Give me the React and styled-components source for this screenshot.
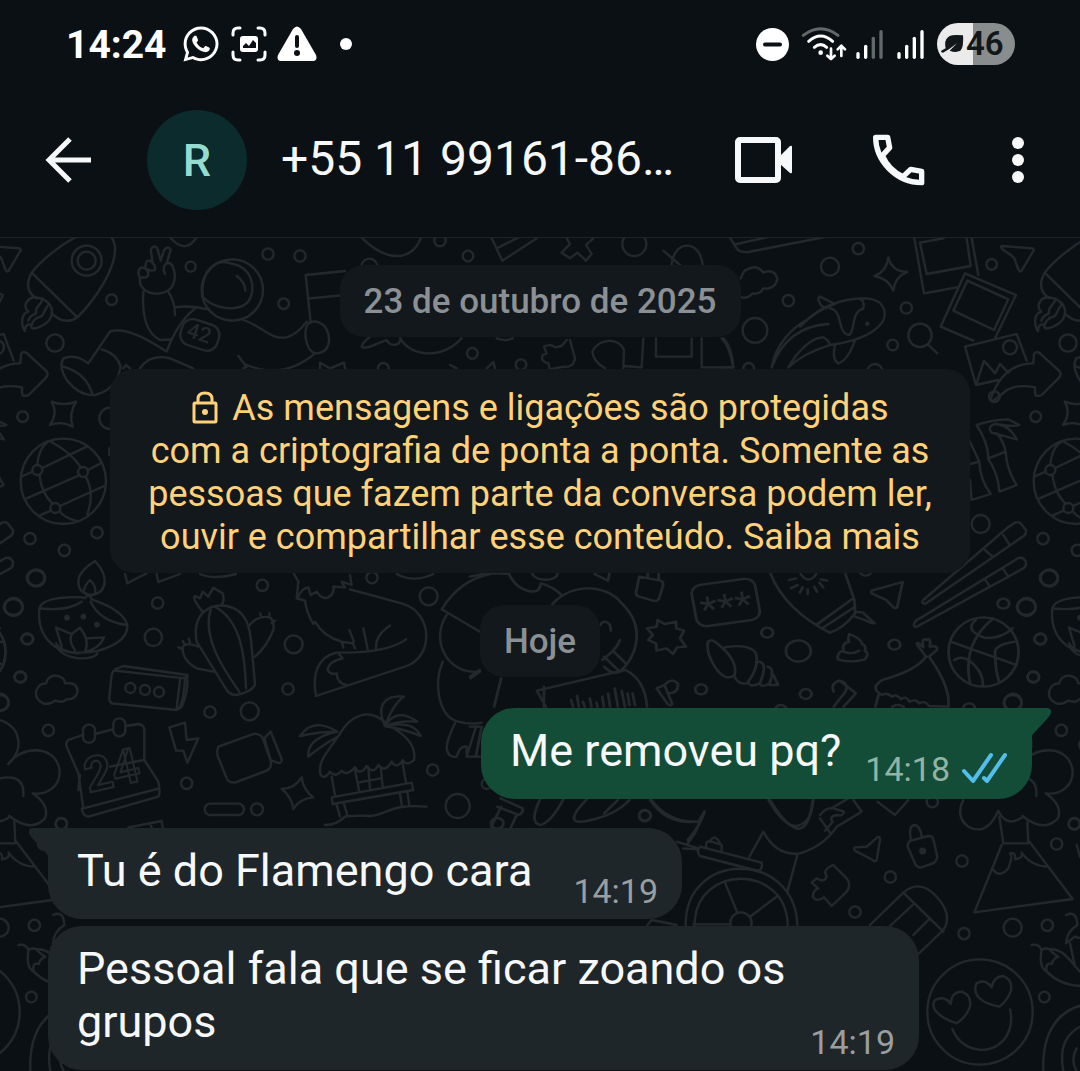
import React from "react";
import styled, { createGlobalStyle } from "styled-components";
import { FaWhatsapp } from "react-icons/fa";

const GlobalStyle = createGlobalStyle`
  *, *::before, *::after { box-sizing: border-box; }
  html, body, #root { min-height: 100%; }
  body {
    margin: 0;
    background: #0b1014;
    color: #f7f8fa;
    font-family: Roboto, "Noto Sans", sans-serif;
  }
`;

const Screen = styled.div`
  display: flex;
  flex-direction: column;
  min-height: 100vh;
  overflow: hidden;
`;

/* ---------- status bar ---------- */

const StatusBar = styled.div`
  display: flex;
  align-items: center;
  justify-content: space-between;
  height: 88px;
  padding: 0 65px 0 66px;
`;

const StatusGroup = styled.div`
  display: flex;
  align-items: center;
  gap: ${(p) => p.$gap}px;
  color: #ffffff;

  svg { display: block; flex: none; }
`;

const Clock = styled.time`
  margin-right: 4px;
  padding-top: 2px;
  font-size: 39px;
  font-weight: 700;
  line-height: 48px;
`;

const MoreDot = styled.span`
  width: 12px;
  height: 12px;
  margin-left: 13px;
  border-radius: 50%;
  background: #ffffff;
`;

const Battery = styled.div`
  display: flex;
  align-items: center;
  width: 78px;
  height: 42px;
  padding-left: 4px;
  gap: 2px;
  border-radius: 21px;
  background: linear-gradient(90deg, #ebebeb 46%, #898d8e 46%);
  color: #12171a;
  font-size: 33px;
  font-weight: 600;
  line-height: 42px;
`;

/* ---------- conversation bar ---------- */

const AppBar = styled.header`
  display: flex;
  align-items: center;
  height: 150px;
  padding: 0 49px 6px 38px;
  border-bottom: 1px solid #1d2327;
`;

const IconButton = styled.button`
  display: grid;
  place-items: center;
  flex: none;
  width: ${(p) => p.$width}px;
  height: 60px;
  padding: 0;
  border: 0;
  background: none;
  color: #f7f8fa;
  cursor: pointer;

  svg { display: block; }
`;

const Avatar = styled.div`
  display: grid;
  place-items: center;
  flex: none;
  width: 100px;
  height: 100px;
  padding-top: 2px;
  margin-left: 49px;
  border-radius: 50%;
  background: #0b2b2d;
  color: #94dbd0;
  font-size: 45px;
  font-weight: 500;
  line-height: 54px;
`;

const Title = styled.h1`
  flex: 1;
  min-width: 0;
  margin: 0 16px 0 34px;
  overflow: hidden;
  font-size: 48px;
  font-weight: 400;
  line-height: 60px;
  padding-bottom: 2px;
  white-space: nowrap;
`;

const Actions = styled.div`
  display: flex;
  gap: 76px;
`;

/* ---------- chat ---------- */

const Chat = styled.main`
  position: relative;
  flex: 1;
`;

const WallpaperLayer = styled.svg`
  position: absolute;
  inset: 0;
  width: 100%;
  height: 100%;
`;

const Thread = styled.div`
  position: relative;
  display: flex;
  flex-direction: column;
  padding: 27px 48px 0;
`;

const DateChip = styled.div`
  align-self: center;
  padding: 17px 24px 15px;
  border-radius: 24px;
  background: #12181c;
  color: #8b9094;
  font-size: 35px;
  font-weight: 500;
  line-height: 40px;
`;

const Notice = styled.p`
  align-self: center;
  width: 860px;
  max-width: 100%;
  margin: 32px 0;
  padding: 18px 24px 14px;
  border-radius: 24px;
  background: #12181c;
  color: #ffd279;
  font-size: 36px;
  line-height: 43px;
  text-align: center;

  svg { vertical-align: -4px; margin-right: 4px; }
`;

const Bubble = styled.article`
  position: relative;
  display: flow-root;
  align-self: ${(p) => (p.$mine ? "flex-end" : "flex-start")};
  max-width: 871px;
  margin-top: ${(p) => p.$gap}px;
  padding: 16px 24px 8px 29px;
  border-radius: 34px;
  ${(p) => p.$tail && (p.$mine ? "border-top-right-radius: 0;" : "border-top-left-radius: 0;")}
  background: ${(p) => (p.$mine ? "#144d37" : "#1f2629")};
  font-size: 45px;
  line-height: 53px;
`;

const Tail = styled.svg`
  position: absolute;
  top: 0;
  ${(p) => (p.$mine ? "right: -20px;" : "left: -20px; transform: scaleX(-1);")}
  color: ${(p) => (p.$mine ? "#144d37" : "#1f2629")};
`;

const Meta = styled.span`
  float: right;
  display: flex;
  align-items: center;
  gap: 12px;
  margin: ${(p) => (p.$mine ? "25px 0 2px" : "27px 0 0")} ${(p) => p.$space}px;
  margin-right: 0;
  color: ${(p) => (p.$mine ? "#93b3a5" : "#9a9ea0")};
  font-size: 34px;
  line-height: 40px;
`;

function Message({ mine, tail, gap, space, time, read, children }) {
  return (
    <Bubble $mine={mine} $tail={tail} $gap={gap}>
      {tail && (
        <Tail $mine={mine} width="21" height="28" viewBox="0 0 21 28" aria-hidden="true">
          <path d="M0 0H17Q21 1 20 5Q19 8 16 11L4 24Q1 27 1 28H0Z" fill="currentColor" />
        </Tail>
      )}
      {children}
      <Meta $mine={mine} $space={space}>
        <time>{time}</time>
        {read && (
          <svg width="46" height="34" viewBox="0 0 46 34" fill="none" stroke="#53bdeb" strokeWidth="4" strokeLinecap="round" strokeLinejoin="round" aria-label="Lida">
            <path d="M2 19L11 29L29 3M22 26L25 29L43 3" />
          </svg>
        )}
      </Meta>
    </Bubble>
  );
}

/* ---------- icons ---------- */

const CaptureIcon = () => (
  <svg width="36" height="36" viewBox="0 0 36 36" fill="none" stroke="currentColor" strokeWidth="3" strokeLinecap="round">
    <path d="M2 9V7Q2 2 7 2H9M27 2H29Q34 2 34 7V9M34 26V29Q34 34 29 34H27M9 34H7Q2 34 2 29V26" />
    <rect x="9" y="10" width="18" height="16" rx="3" fill="currentColor" stroke="none" />
    <path d="M12 20L15 17L18 20L22 14L25 17V22H12Z" fill="#0b1014" stroke="none" />
  </svg>
);

const WarningIcon = () => (
  <svg width="40" height="36" viewBox="0 0 40 36">
    <path d="M16 3Q20-2 24 3L39 29Q41 35 35 35H5Q-1 35 1 29Z" fill="currentColor" />
    <path d="M20 11V20" stroke="#0b1014" strokeWidth="4" strokeLinecap="round" />
    <circle cx="20" cy="27" r="3" fill="#0b1014" />
  </svg>
);

const DndIcon = () => (
  <svg width="33" height="33" viewBox="0 0 33 33">
    <circle cx="16.500" cy="16.500" r="16.500" fill="currentColor" />
    <path d="M9 16.500H24" stroke="#0b1014" strokeWidth="4" strokeLinecap="round" />
  </svg>
);

const WifiIcon = () => (
  <svg width="46" height="36" viewBox="240 78 138 108" fill="none" stroke="currentColor" strokeWidth="9" strokeLinecap="round" strokeLinejoin="round">
    <path d="M247 106Q299 66 351 106" stroke="#63686b" />
    <path d="M263 124Q299 92 335 124M280 142Q299 126 317 142" />
    <circle cx="299" cy="158" r="7" fill="currentColor" stroke="none" />
    <path d="M330 146V176M319 167L330 177L341 167M361 168V138M350 148L361 137L372 148" strokeWidth="8" />
  </svg>
);

const SignalIcon = ({ bars }) => (
  <svg width="29" height="31" viewBox="402 84 87 93" strokeWidth="10" strokeLinecap="round">
    {[158, 136, 112, 92].map((y, i) => (
      <path key={y} d={`M${411 + i * 23} ${y}V169`} stroke={i < bars ? "#ffffff" : "#63686b"} />
    ))}
  </svg>
);

const LeafIcon = () => (
  <svg width="23" height="20" viewBox="664 102 69 60" fill="#12171a">
    <path d="M730 106Q733 154 716 154Q708 159 690 152L712 130Q690 148 670 158Q660 158 667 151L678 145Q672 118 690 108Q700 103 730 106Z" />
  </svg>
);

const BackIcon = () => (
  <svg width="48" height="48" viewBox="0 0 48 48" fill="none" stroke="currentColor" strokeWidth="5">
    <path d="M47 24H5M26 3L5 24L26 45" />
  </svg>
);

const VideoIcon = () => (
  <svg width="60" height="48" viewBox="0 0 60 48">
    <rect x="5" y="4" width="40" height="40" rx="2" fill="none" stroke="currentColor" strokeWidth="6" />
    <path d="M47 20L57 10Q59 9 59 11V36Q59 38 57 37L47 28Z" fill="currentColor" />
  </svg>
);

const PhoneIcon = () => (
  <svg width="54" height="54" viewBox="457 396 162 162" fill="none" stroke="currentColor" strokeWidth="16" strokeLinejoin="round">
    <path d="M468 409H504L510 440L488 464Q508 509 550 527L573 505L606 511V545C530 545 468 480 468 409Z" />
  </svg>
);

const MenuIcon = () => (
  <svg width="14" height="48" viewBox="0 0 14 48" fill="currentColor">
    <circle cx="7" cy="7" r="6" />
    <circle cx="7" cy="24" r="6" />
    <circle cx="7" cy="41" r="6" />
  </svg>
);

const LockIcon = () => (
  <svg width="28" height="34" viewBox="0 0 28 34" fill="none" stroke="currentColor" strokeWidth="3" aria-hidden="true">
    <rect x="3" y="13" width="22" height="19" rx="1" />
    <path d="M7 13V9Q7 3 14 3T21 9V13" />
    <circle cx="14" cy="22" r="3" fill="currentColor" stroke="none" />
  </svg>
);

/* ---------- wallpaper ---------- */

const TILE = 1013;

const Dots = ({ items }) => items.map(([x, y, r]) => <circle key={`${x}-${y}`} cx={x} cy={y} r={r} />);

function Doodles() {
  return (
    <g fill="none" stroke="#22282c" strokeWidth="7" strokeLinecap="round" strokeLinejoin="round">
      {/* rocket, astronaut, whale flag */}
      <g transform="translate(0 230) scale(.33333)">
        <Dots items={[[260, 92, 45], [260, 92, 27], [335, 209, 16], [165, 339, 26], [68, 560, 16], [572, 110, 15], [804, 72, 17], [900, 78, 17], [851, 221, 16], [330, 565, 32]]} />
        <path d="M230 20C180 45 120 95 95 128L232 262C290 205 350 110 345 50Q342 30 330 15M95 128C75 165 85 190 110 205M155 250C185 280 215 275 232 262" />
        <path d="M110 202C85 200 65 225 85 245C65 250 60 280 75 303C75 285 85 280 95 285C90 300 105 298 130 285C150 275 165 250 150 225C140 210 125 205 110 202M128 205C120 235 105 225 108 250C95 255 88 262 85 272M145 225C130 240 135 260 115 262Q100 268 95 285" />
        <path d="M510 22Q555 75 590 22" />
        <circle cx="697" cy="180" r="92" />
        <path d="M608 200C600 120 650 85 690 100C760 110 770 180 745 215C710 250 640 235 608 200M710 138Q735 155 736 182" />
        <path d="M420 145C415 170 440 195 480 190C525 185 530 140 520 115Q515 95 500 100L512 60Q505 45 492 60L482 92L472 55Q460 42 452 60L458 98M420 145Q408 120 425 112Q445 115 445 135Q440 145 425 142M437 110Q435 90 450 92Q470 105 464 120Q452 125 445 118M500 100Q485 110 495 132" />
        <path d="M430 185C425 260 440 310 480 330L512 328M505 185Q525 215 525 255M525 232Q570 225 625 238M585 235Q530 280 500 365Q380 285 330 305L265 400Q225 370 190 385Q175 410 200 450Q240 500 285 495Q350 480 362 410Q350 370 305 358M190 410Q260 430 278 495M730 270C790 290 810 330 860 322Q890 315 920 275M420 415Q450 370 510 385L580 415M715 378L740 410L730 415M740 405Q850 450 945 370" />
        <rect x="542" y="275" width="115" height="80" rx="32" transform="rotate(18 600 315)" />
        <path d="M917 135L1035 123M930 205L1035 195M917 135L932 278M960 415V398L990 415L1032 398L1035 415M370 415L378 405L390 415" />
        <path d="M932 275C905 290 915 360 945 370C985 372 1000 330 975 290Q955 270 932 275Z" />
        <path d="M155 515Q190 530 228 515Q205 552 218 590Q185 572 150 585Q175 550 155 515Z" />
        <text x="560" y="332" transform="rotate(18 600 315)" fontFamily="Roboto, sans-serif" fontSize="64" fontWeight="500" fill="#22282c" stroke="none">42</text>
      </g>
      {/* shapes around the date */}
      <g transform="translate(340 230) scale(.33333)">
        <Dots items={[[300, 32, 17], [384, 78, 16], [88, 110, 24], [883, 42, 36], [397, 370, 16], [130, 415, 16], [543, 404, 16]]} />
        <path d="M60 18Q120 80 175 78Q225 75 245 18M455 25L487 92L590 25M470 55L540 20M680 25L690 42L665 68L690 85L712 68L738 92L755 72L738 45L760 25M970 62L1020 105M995 105C1000 30 1080 25 1088 105" />
        <path d="M90 320C60 345 55 360 90 350L140 330C150 350 180 350 182 325M180 325C220 385 310 385 365 325M470 325Q495 335 518 325" />
        <path d="M690 330L705 385Q700 415 670 410L630 418L625 400Q600 395 608 375L620 370L612 350Q635 340 645 352L665 348L680 330" />
        <path d="M850 415L852 360C835 320 775 325 757 365Q760 395 795 415M910 325L905 412L850 408M948 325V380H1055V325M1085 325V412L1180 412Q1170 350 1145 325M330 405L350 415M440 415L460 396L465 415" />
      </g>
      {/* koi, photos, paper plane */}
      <g transform="translate(720 230) scale(.33333)">
        <Dots items={[[330, 110, 27], [415, 56, 17], [205, 212, 17], [105, 301, 37], [559, 234, 17], [518, 345, 16], [815, 103, 16], [870, 352, 21], [600, 316, 35], [86, 415, 16], [465, 425, 23]]} />
        <path d="M28 20L50 55Q58 68 85 66L310 22M45 43L140 22M62 145Q72 120 78 120Q110 100 130 128Q165 115 172 148Q165 180 130 175Q120 195 98 190Q80 210 62 200" />
        <path d="M505 82Q515 125 562 126Q525 140 520 182Q505 145 463 138Q500 125 505 82Z" />
        <path d="M583 25L612 190L710 172M600 38L670 25M600 38L620 132L752 108L740 25M755 25L775 135" />
        <path d="M735 130L888 195L825 325M735 130L662 290L760 332M742 152L865 208L822 300L700 242Z" />
        <path d="M735 350L890 312L920 392M735 350L768 465L835 450M768 465L792 392L825 430L840 402L865 428" />
        <path d="M820 512Q800 520 835 458C860 420 895 400 940 400L942 372Q948 362 960 370L1020 425Q1025 435 1015 445L965 495Q945 502 945 490V472Q880 460 848 490Z" />
        <path d="M845 48L938 55Q945 60 938 66L905 122Q900 128 895 118L883 85Q878 78 868 72L850 60Q840 52 845 48Z" />
        <path d="M155 412C165 345 220 290 260 270Q330 205 440 205C500 210 505 260 480 285Q440 330 330 345Q250 370 205 412C240 350 285 320 310 322Q330 335 328 345M240 290Q290 240 345 222L300 200Q288 205 305 228L320 235M330 235C370 240 350 310 388 315C410 290 390 250 430 235Q435 215 420 207M155 412Q200 290 325 282M345 345Q335 390 355 400Q385 390 405 330M10 325Q35 350 40 412H0M625 345L652 370" />
        <circle cx="442" cy="281" r="3" />
      </g>
      {/* globe and small bubbles */}
      <g transform="translate(0 440) scale(.33333)">
        <Dots items={[[190, 124, 128], [112, 90, 15], [249, 96, 15], [166, 204, 15], [90, 296, 17], [193, 331, 17], [291, 278, 17], [109, 414, 26]]} />
        <path d="M68 108L98 95M127 84L260 20M80 175L240 105M264 90L302 70M120 226L152 212M180 198L312 138M112 75Q115 25 145 4M150 4Q210 35 243 82M118 105Q125 160 158 192M257 110Q285 160 262 222M180 215Q195 235 230 243M328 25V45" />
      </g>
      {/* bamboo and chopsticks */}
      <g transform="translate(940 400) scale(.33333)">
        <Dots items={[[122, 372, 27], [163, -10, 16]]} />
        <path d="M110 75Q150 60 205 58L238 75Q220 82 165 72M110 75Q145 130 145 175L197 155Q190 120 170 100M165 72Q140 80 155 98L230 118Q210 80 180 75M145 178Q175 220 178 275L230 255Q200 210 197 155M90 125L118 185L90 192M118 185Q120 240 152 282L95 300L90 240" />
        <path d="M-45 612Q-58 610 -50 600L200 385L225 368Q240 362 248 378L258 390Q260 405 245 412L-45 612M-78 672Q-75 660 -60 655L235 474Q250 470 257 484Q262 500 245 508L-70 680Q-80 682 -78 672M135 450L158 470M190 405L207 432M135 538L150 560M188 505L205 530" />
      </g>
      {/* diya, cactus, fox, calendar, beach hut */}
      <g transform="translate(0 560) scale(.33333)">
        <Dots items={[[41, 141, 27], [82, 237, 17], [61, 351, 17], [0, 427, 26], [473, 129, 17], [460, 232, 26], [787, 76, 17], [1116, 53, 17], [1286, 109, 27], [881, 253, 27], [864, 387, 17], [630, 456, 17], [749, 454, 27], [145, 511, 17], [560, 670, 17], [771, 748, 18], [184, 791, 17], [1298, 630, 17], [1373, 738, 36], [391, 384, 15], [435, 390, 15], [477, 396, 15], [1460, 672, 15]]} />
        <g fill="#22282c"><circle cx="201" cy="173" r="5" /><circle cx="250" cy="170" r="5" /><circle cx="291" cy="194" r="5" /></g>
        <path d="M285 3Q315 35 314 65Q312 100 275 105Q235 100 235 65Q235 35 285 3ZM270 60Q290 80 285 98M270 60Q250 80 252 98M118 145Q130 108 245 112Q255 118 262 105Q270 105 275 118Q370 150 382 195Q300 185 272 125M118 145Q200 155 245 125M118 145C110 225 160 280 235 278C310 280 385 245 382 195M168 250Q180 275 235 280M170 258C185 300 280 305 292 280M185 260L168 203L215 222L240 203Q270 240 255 275M215 222Q205 245 225 270M262 235L312 232Q300 265 255 275" />
        <path d="M130 430Q105 420 108 395Q115 370 138 370Q145 345 170 347Q195 352 195 370Q230 365 233 392Q230 420 198 418Q190 430 165 422Q150 435 130 430Z" />
        <path d="M345 332L555 355Q550 440 530 450L335 430Q325 420 328 410L335 345Q338 330 345 332ZM345 328L370 318L562 345Q565 400 545 440L530 450M555 355L562 345M540 360L530 445" />
        <path d="M375 42L382 70L440 40M470 42L475 66L540 42M600 42Q640 60 708 42M608 155Q575 115 585 108L600 115L608 95L625 110L640 83L668 100Q675 120 665 135" />
        <path d="M590 245C575 160 630 130 680 138C740 150 750 200 755 260L765 375Q755 395 710 405Q690 405 680 390L590 245ZM632 148C610 220 650 300 718 395M645 140C720 180 735 280 738 385M745 200Q770 165 810 172Q825 185 820 210Q800 260 765 290M595 260Q560 245 548 260Q545 300 590 325L640 335M780 160L785 172M808 160V172M825 182L815 188M535 262L548 268M548 243L555 255M566 236L570 248" />
        <path d="M882 42L895 65L890 115L915 122Q920 160 940 192L945 185Q970 230 1025 245L1058 250M895 110Q905 85 925 82L932 105L950 95Q965 120 985 112Q1005 100 1000 80L1035 82L1025 65L1055 75L1050 45M1050 88L1210 132C1300 160 1300 290 1220 318L948 408C935 340 955 290 1010 278Q1160 280 1218 238M1058 248L1065 265M1025 245L1030 262M1048 210L1062 245M1090 205L1103 268M1128 268Q1125 225 1170 197M1015 280L1028 295Q985 305 983 330Q990 345 1010 340Q1010 370 1040 375M1190 42Q1240 70 1300 42" />
        <path d="M1470 42Q1380 60 1325 148L1440 215M1340 165C1290 240 1340 345 1440 335M1328 305C1300 370 1315 470 1375 485Q1410 495 1445 488M1412 355L1440 335M1365 490Q1340 540 1340 565Q1345 595 1370 590Q1380 555 1400 560V590H1440M1428 500L1400 590" />
        <path d="M248 525L205 540Q195 550 200 560L235 640M285 522L338 508M378 498L415 492Q435 495 433 515V600L475 665Q482 700 475 710L265 770Q248 768 245 745M235 640L250 745L478 685M432 600L330 620M240 645L235 690" />
        <rect x="249" y="494" width="36" height="54" rx="17" /><rect x="340" y="475" width="36" height="54" rx="17" />
        <text x="252" y="680" transform="rotate(-13 340 630)" fontFamily="Roboto, sans-serif" fontSize="145" fontWeight="700" strokeWidth="6">24</text>
        <path d="M508 502L555 488L560 540L595 535L562 608L550 572L528 572Z" />
        <path d="M655 560L760 522Q785 520 790 540L813 605Q815 625 800 632L705 668Q685 668 680 655L652 585Q650 570 655 560ZM793 535L812 515L846 600Q842 612 832 608L812 600Z" />
        <rect x="614" y="731" width="118" height="34" rx="17" />
        <path d="M905 652Q910 690 940 712Q900 715 880 747Q875 710 845 687Q885 685 905 652Z" />
        <path d="M962 645C950 600 990 570 1030 505Q1090 430 1160 490L1200 518Q1250 555 1242 600Q1220 620 1208 600Q1190 630 1175 605Q1155 640 1135 615Q1120 645 1100 618Q1080 650 1065 622Q1040 650 1025 632Q1005 655 990 635Q975 660 962 645ZM1012 515Q940 470 900 528Q960 515 1012 515M1012 515Q920 535 925 590Q960 560 1012 530M1155 498C1125 430 1160 405 1212 410Q1180 430 1155 498Q1190 440 1252 485Q1200 480 1155 498Q1240 480 1262 528Q1220 510 1155 498M995 712L1235 668L1240 690L998 732ZM995 650L1005 705M1065 630L1078 695M1142 620L1148 680M1208 610L1218 668M1105 622L1110 685M1075 668L1140 655M1010 735L1020 770M1032 732L1042 765M1200 700L1205 735M1222 695L1228 735M975 795Q1010 795 1035 770Q1090 765 1110 768C1160 765 1170 730 1280 740M385 802L485 783L488 802M450 792L455 802" />
      </g>
      {/* whale, shell, note, ball */}
      <g transform="translate(470 560) scale(.38903 .33333)">
        <Dots items={[[764, 218, 15], [844, 273, 32], [594, 388, 15], [863, 402, 15], [1091, 254, 15], [1371, 131, 15], [1430, 141, 24], [1488, 54, 23], [1466, 237, 15], [1448, 351, 15], [1395, 428, 23], [1017, 32, 15], [1283, 445, 15], [799, 450, 15], [450, 767, 15]]} />
        <ellipse cx="1320" cy="276" rx="90" ry="104" />
        <path d="M0 50Q50 35 100 42Q120 90 160 95Q180 95 182 70M160 42C170 65 220 65 225 42M320 42L355 62L358 42M182 70Q215 80 235 105M212 132C260 70 350 70 390 130C460 210 420 300 385 335Q365 345 345 320M335 195Q345 175 360 195L362 212M385 240Q380 265 340 300M345 290L385 335M370 275L400 310" />
        <path d="M435 50L490 62Q498 65 496 78L485 118Q480 125 470 122L430 108Q424 100 428 90L435 50M457 50V40M485 60V40" />
        <rect x="575" y="65" width="165" height="125" rx="26" transform="rotate(-9 657 128)" />
        <path d="M482 180L500 192L530 185V205L550 212L540 235L555 260L532 262L522 282L505 265L480 272L478 250L458 240L470 225L455 205L480 200Z" />
        <path d="M772 40Q810 150 925 218Q960 205 990 160L988 120L965 42M890 195L985 115M905 205L990 140M990 155L1010 158L1040 190Q1035 192 1015 180L985 168M820 60L838 55M825 85L842 75M848 98L855 82M868 102V88M892 95L885 80M908 82L898 68M918 62L902 58M850 42Q870 75 890 42" />
        <path d="M1032 92L1112 66L1098 142Q1092 148 1085 138L1070 120L1032 100Z" />
        <path d="M1235 245L1405 315M1300 180Q1270 210 1320 232Q1360 240 1395 205M1345 175Q1265 250 1285 368M1245 300Q1270 280 1300 320Q1320 345 1318 378M1402 245Q1345 255 1350 280Q1350 330 1360 365" />
        <path d="M975 222Q970 240 975 245Q955 250 960 270Q942 280 945 298Q980 310 1015 298Q1028 280 1015 272Q1020 258 1008 252Q1005 235 975 222ZM960 275Q980 285 1000 272" />
        <path d="M612 245Q620 235 635 250Q690 300 680 345Q660 365 635 330Q605 280 612 245ZM655 262Q720 250 735 280Q745 320 712 370Q690 375 680 350M735 305Q770 300 745 370Q720 385 715 365M765 320Q785 325 770 370Q750 385 745 370M780 345L792 375L770 375" />
        <path d="M480 385L500 375L520 432Q515 440 508 432ZM500 375Q520 350 535 372Q535 400 510 400M935 395Q925 370 950 362L992 400L960 440M950 362Q975 370 965 395L935 440" />
        <path d="M1172 290L1150 255Q1145 240 1165 262Q1160 230 1175 240Q1185 230 1182 260Q1205 255 1200 270L1180 290ZM1172 290Q1150 330 1060 360Q1025 385 1060 405Q1070 395 1085 410Q1095 400 1108 418Q1120 405 1130 425Q1145 415 1155 430Q1170 420 1180 438L1230 440Q1235 380 1180 290M1050 405L1042 440M1085 440Q1100 430 1115 440" />
        <path d="M172 392L400 330Q450 360 455 440M172 392L195 440M190 380V440M260 420L265 440M275 408L280 440M290 425L295 440M308 415L312 440M325 428L328 440M340 410L344 440M355 400L360 440M372 385L380 440M390 392L398 440M405 400L410 435M418 400L424 435M80 355L62 440M0 500H30L15 590M0 350L25 330" />
        <path d="M78 715L135 745Q138 760 125 765L70 740M80 740L55 800M120 765L105 802M180 718Q150 790 182 795Q210 785 240 718M300 718Q240 790 290 785Q370 770 410 720M380 720L345 760M465 718Q510 790 590 785L603 755Q595 790 560 840M770 718Q850 870 875 760L882 718" />
        <circle cx="70" cy="790" r="16" />
        <text x="590" y="176" transform="rotate(-9 657 128)" fontFamily="Roboto, sans-serif" fontSize="104" fill="#22282c" stroke="none">***</text>
      </g>
      {/* wheel, padlock, volcano, smiley, peppers */}
      <g transform="translate(640 800) scale(.33333)">
        <Dots items={[[14, 47, 17], [751, 231, 17], [645, 336, 17], [966, 183, 17], [972, 401, 17], [1118, 383, 27], [1222, 376, 17], [1250, 132, 17], [1303, 72, 17], [877, 5, 17], [1213, 591, 16], [1020, 636, 158], [303, 369, 32]]} />
        <path d="M30 0Q80 75 175 65L193 35M180 65L165 100L140 135M110 125L175 145M130 145L172 148M385 0C420 60 450 80 470 78Q515 70 520 0M180 140L365 188Q370 205 355 213L180 168Q168 155 180 140ZM198 140Q195 120 215 125L245 135V150M210 122Q225 100 240 130" />
        <path d="M137 375C135 150 465 150 472 375M164 375C165 190 440 190 443 375M255 248L292 338M410 290L333 348M160 373H270M22 375L35 360L110 375M328 170L370 95Q410 170 480 160Q550 140 590 80L665 35L640 0M540 55L570 98M472 165L442 275M540 45Q560 20 580 25L612 35Q610 50 590 45Q565 50 578 65L555 92M575 25L625 -5" />
        <path d="M645 142L680 140L712 112Q722 108 720 120L710 180Q705 188 698 180L645 152Q640 147 645 142ZM712 5L765 45L805 0M580 195L620 235Q635 255 620 275L575 318L552 292Q530 308 518 290Q520 270 535 265L515 248L530 235Q555 250 560 228Q545 210 580 195Z" />
        <path d="M812 122L865 108Q878 108 880 118L892 170Q890 185 878 190L842 203Q828 200 825 190L803 140Q803 125 812 122ZM812 115Q805 75 825 75Q840 78 845 108M690 375L790 278Q840 235 890 290Q940 345 910 390L835 462M790 278L910 395M818 315L750 378M870 355L820 405" />
        <circle cx="848" cy="153" r="7" fill="#22282c" />
        <path d="M970 0Q945 50 985 80Q1040 110 1075 32Q1100 85 1150 50M1078 50L1090 130H1165L1162 65M1085 135L1003 337L1298 297L1168 125M1060 210Q1080 235 1105 205Q1120 165 1110 160Q1128 155 1125 178Q1150 175 1145 158Q1175 200 1225 200" />
        <path d="M950 670C890 650 870 620 885 600Q915 585 932 612Q935 575 965 575Q995 585 990 620Q980 650 950 670ZM1078 620C1020 610 995 580 1010 550Q1035 535 1055 562Q1060 530 1090 528Q1120 540 1112 575Q1100 605 1078 620ZM937 687C970 770 1080 770 1108 690Q1118 660 1110 628" />
        <path d="M1175 435Q1195 430 1205 450Q1195 500 1220 515Q1215 485 1235 492Q1240 475 1255 470Q1230 455 1230 448Q1260 445 1290 480L1320 515M1205 450Q1215 442 1230 448M1220 515Q1260 555 1320 558M1278 345Q1310 330 1312 375Q1280 395 1278 430L1305 410Q1330 420 1325 400M1290 430L1305 500M1310 135L1320 170" />
        <path d="M1210 813C1205 690 1260 630 1330 615M1270 813Q1250 710 1330 675M1310 813Q1290 780 1310 745" />
      </g>
      {/* tree crossing the tile edge */}
      <g transform="translate(0 560) scale(.33333)">
        <path d="M0 480Q60 500 55 560Q50 590 25 612C60 560 160 550 178 625C185 680 140 705 98 700Q150 735 135 775Q95 820 28 768M0 655Q75 640 70 708" />
      </g>
    </g>
  );
}

function Wallpaper() {
  return (
    <WallpaperLayer aria-hidden="true">
      <defs>
        <g id="doodles"><Doodles /></g>
        <pattern id="tile" patternUnits="userSpaceOnUse" width={TILE} height="882">
          <g transform="translate(0 -238)">
            <use href="#doodles" x={-TILE} />
            <use href="#doodles" />
            <use href="#doodles" x={TILE} />
          </g>
        </pattern>
      </defs>
      <rect width="100%" height="100%" fill="url(#tile)" />
    </WallpaperLayer>
  );
}

export default function App() {
  return (
    <Screen>
      <GlobalStyle />
      <StatusBar>
        <StatusGroup $gap={10}>
          <Clock>14:24</Clock>
          <FaWhatsapp size={40} />
          <CaptureIcon />
          <WarningIcon />
          <MoreDot />
        </StatusGroup>
        <StatusGroup $gap={12}>
          <DndIcon />
          <StatusGroup $gap={8}>
            <WifiIcon />
            <SignalIcon bars={2} />
          </StatusGroup>
          <SignalIcon bars={4} />
          <Battery>
            <LeafIcon />
            46
          </Battery>
        </StatusGroup>
      </StatusBar>

      <AppBar>
        <IconButton $width={60} aria-label="Voltar"><BackIcon /></IconButton>
        <Avatar>R</Avatar>
        <Title>+55 11 99161-86…</Title>
        <Actions>
          <IconButton $width={60} aria-label="Chamada de vídeo"><VideoIcon /></IconButton>
          <IconButton $width={60} aria-label="Chamada de voz"><PhoneIcon /></IconButton>
          <IconButton $width={26} aria-label="Mais opções"><MenuIcon /></IconButton>
        </Actions>
      </AppBar>

      <Chat>
        <Wallpaper />
        <Thread>
          <DateChip>23 de outubro de 2025</DateChip>
          <Notice>
            <LockIcon /> As mensagens e ligações são protegidas
            <br />
            com a criptografia de ponta a ponta. Somente as
            <br />
            pessoas que fazem parte da conversa podem ler,
            <br />
            ouvir e compartilhar esse conteúdo. Saiba mais
          </Notice>
          <DateChip>Hoje</DateChip>
          <Message mine tail gap={31} space={24} time="14:18" read>Me removeu pq?</Message>
          <Message tail gap={29} space={41} time="14:19">Tu é do Flamengo cara</Message>
          <Message gap={7} space={41} time="14:19">Pessoal fala que se ficar zoando os grupos</Message>
        </Thread>
      </Chat>
    </Screen>
  );
}
